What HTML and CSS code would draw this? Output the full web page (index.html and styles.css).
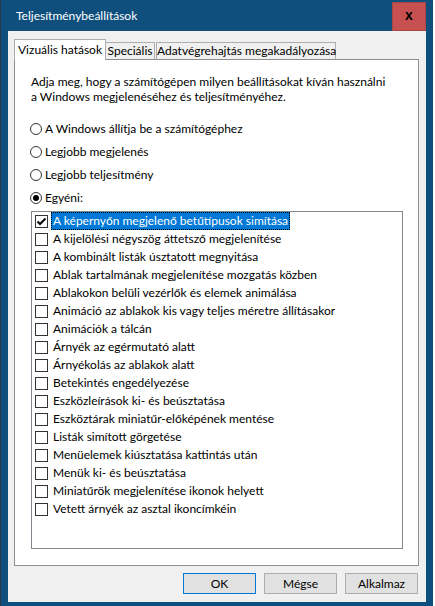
FILE: index.html
```html
<!DOCTYPE html>
<html lang="hu">
<head>
  <meta charset="UTF-8">
  <title>Teljesítménybeállítások</title>
  <link rel="stylesheet" href="styles.css">
</head>
<body>
  <div class="window">
    <div class="titlebar">
      <span class="title">Teljesítménybeállítások</span>
      <div class="close">x</div>
    </div>
    <div class="client">
      <div class="tabs">
        <div class="tab active">Vizuális hatások</div>
        <div class="tab tab-spec">Speciális</div>
        <div class="tab tab-dep">Adatvégrehajtás megakadályozása</div>
      </div>
      <div class="panel">
        <p class="desc">Adja meg, hogy a számítógépen milyen beállításokat kíván használni<br>a Windows megjelenéséhez és teljesítményéhez.</p>

        <div class="radios">
          <div class="radio-row"><span class="radio"></span>A Windows állítja be a számítógéphez</div>
          <div class="radio-row"><span class="radio"></span>Legjobb megjelenés</div>
          <div class="radio-row"><span class="radio"></span>Legjobb teljesítmény</div>
          <div class="radio-row"><span class="radio checked"></span>Egyéni:</div>
        </div>

        <div class="listbox">
          <div class="item"><span class="box checked"><svg width="11" height="11" viewBox="0 0 11 11"><path d="M1.5 5.5 L4 8 L9.5 2.5" fill="none" stroke="#000" stroke-width="2"/></svg></span><span class="label selected">A képernyőn megjelenő betűtípusok simítása</span></div>
          <div class="item"><span class="box"></span><span class="label">A kijelölési négyszög áttetsző megjelenítése</span></div>
          <div class="item"><span class="box"></span><span class="label">A kombinált listák úsztatott megnyitása</span></div>
          <div class="item"><span class="box"></span><span class="label">Ablak tartalmának megjelenítése mozgatás közben</span></div>
          <div class="item"><span class="box"></span><span class="label">Ablakokon belüli vezérlők és elemek animálása</span></div>
          <div class="item"><span class="box"></span><span class="label">Animáció az ablakok kis vagy teljes méretre állításakor</span></div>
          <div class="item"><span class="box"></span><span class="label">Animációk a tálcán</span></div>
          <div class="item"><span class="box"></span><span class="label">Árnyék az egérmutató alatt</span></div>
          <div class="item"><span class="box"></span><span class="label">Árnyékolás az ablakok alatt</span></div>
          <div class="item"><span class="box"></span><span class="label">Betekintés engedélyezése</span></div>
          <div class="item"><span class="box"></span><span class="label">Eszközleírások ki- és beúsztatása</span></div>
          <div class="item"><span class="box"></span><span class="label">Eszköztárak miniatűr-előképének mentése</span></div>
          <div class="item"><span class="box"></span><span class="label">Listák simított görgetése</span></div>
          <div class="item"><span class="box"></span><span class="label">Menüelemek kiúsztatása kattintás után</span></div>
          <div class="item"><span class="box"></span><span class="label">Menük ki- és beúsztatása</span></div>
          <div class="item"><span class="box"></span><span class="label">Miniatűrök megjelenítése ikonok helyett</span></div>
          <div class="item"><span class="box"></span><span class="label">Vetett árnyék az asztal ikoncímkéin</span></div>
        </div>
      </div>

      <div class="buttons">
        <button class="btn default">OK</button>
        <button class="btn">Mégse</button>
        <button class="btn">Alkalmaz</button>
      </div>
    </div>
  </div>
</body>
</html>
```

FILE: styles.css
```css
body {
  margin: 0;
  background: #fff;
  font-family: 'Lato', 'Noto Sans', sans-serif;
  font-size: 12px;
  color: #000;
}
.window {
  width: 433px;
  height: 606px;
  box-sizing: border-box;
  background: #0f4f7e;
  border-left: 1px solid #26394a;
}
.titlebar {
  height: 31px;
  display: flex;
  align-items: flex-start;
  padding: 0 7px 0 15px;
}
.title {
  color: #fff;
  line-height: 31px;
}
.close {
  margin-left: auto;
  margin-top: 2px;
  width: 34px;
  height: 29px;
  box-sizing: border-box;
  background: #c75050;
  border: 1px solid #a84545;
  color: #000;
  font-family: 'Liberation Sans', sans-serif;
  font-weight: bold;
  font-size: 14px;
  line-height: 25px;
  text-align: center;
}
.client {
  margin: 0 7px;
  height: 571px;
  background: #f0f0f0;
  display: flex;
  flex-direction: column;
}
.tabs {
  display: flex;
  align-items: flex-end;
  margin-top: 8px;
  padding-left: 6px;
  height: 20px;
}
.tab {
  height: 17px;
  box-sizing: border-box;
  border: 1px solid #adadad;
  border-bottom: none;
  background: #f0f0f0;
  text-align: center;
  line-height: 16px;
  white-space: nowrap;
}
.tab.active {
  width: 92px;
  height: 21px;
  margin-bottom: -1px;
  background: #fff;
  line-height: 20px;
  position: relative;
  z-index: 1;
}
.tab-spec {
  width: 50px;
  margin-left: -1px;
}
.tab-dep {
  width: 180px;
  margin-left: 1px;
}
.panel {
  margin-left: 6px;
  width: 405px;
  height: 507px;
  box-sizing: border-box;
  border: 1px solid #8e8f8f;
  background: #fff;
  padding: 14px 15px 0 16px;
}
.desc {
  margin: 0;
  line-height: 15px;
}
.radios {
  margin-top: 13px;
}
.radio-row {
  height: 23px;
  display: flex;
  align-items: center;
}
.radio {
  width: 12px;
  height: 12px;
  box-sizing: border-box;
  border: 1px solid #333;
  border-radius: 50%;
  margin-left: -1px;
  margin-right: 3px;
  display: flex;
  align-items: center;
  justify-content: center;
}
.radio.checked::after {
  content: "";
  width: 6px;
  height: 6px;
  border-radius: 50%;
  background: #000;
}
.listbox {
  margin-top: 2px;
  height: 338px;
  box-sizing: border-box;
  border: 1px solid #828790;
  padding: 0 0 0 3px;
}
.item {
  height: 18px;
  display: flex;
  align-items: center;
}
.box {
  width: 13px;
  height: 13px;
  box-sizing: border-box;
  border: 1px solid #333;
  background: #fff;
  display: flex;
  align-items: center;
  justify-content: center;
}
.label {
  margin-left: 3px;
  padding: 0 1px;
  line-height: 16px;
  border: 1px dotted transparent;
  white-space: nowrap;
}
.label.selected {
  background: #0078d7;
  color: #fff;
  border-color: #000;
}
.buttons {
  display: flex;
  justify-content: flex-end;
  gap: 8px;
  margin-top: 7px;
  padding-right: 8px;
}
.btn {
  width: 73px;
  height: 21px;
  box-sizing: border-box;
  border: 1px solid #adadad;
  background: #e1e1e1;
  font-family: inherit;
  font-size: 12px;
  color: #000;
  padding: 0;
}
.btn.default {
  border-color: #0078d7;
}
```
